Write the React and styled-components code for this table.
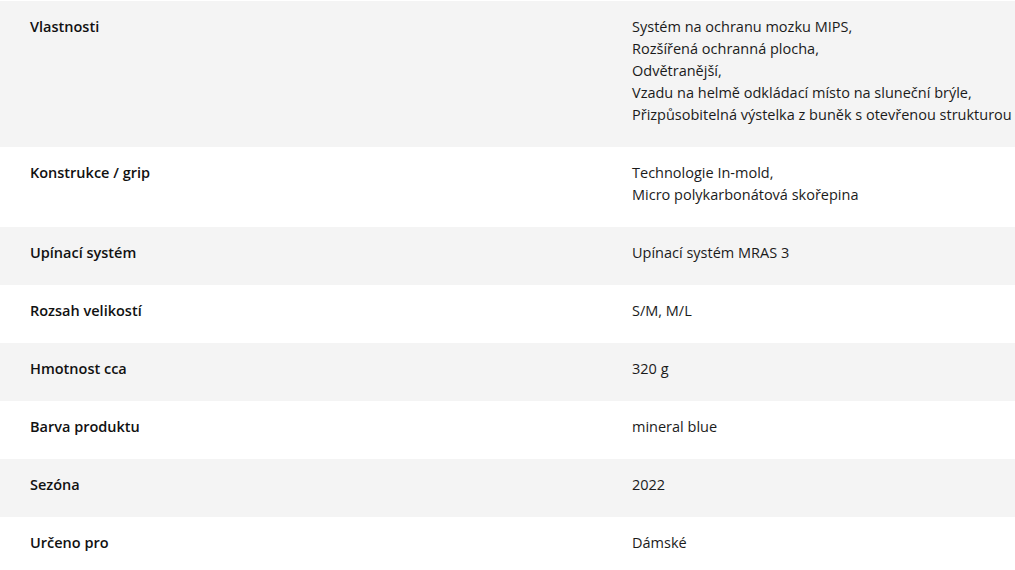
import React from "react";
import styled, { createGlobalStyle } from "styled-components";

const Global = createGlobalStyle`
  html, body { margin: 0; padding: 0; background: #ffffff; }
  body { font-family: "Open Sans", "Noto Sans", sans-serif; color: #1b1b1b; }
`;

const Table = styled.div`
  padding-top: 1px;
  width: 1015px;
  overflow: hidden;
`;

const Row = styled.div`
  display: grid;
  grid-template-columns: 632px 1fr;
  background: ${(p) => (p.$shaded ? "#f4f4f4" : "#ffffff")};
`;

const Label = styled.div`
  padding: 15px 0 21px 30px;
  font-size: 14.5px;
  line-height: 22px;
  font-weight: 600;
  color: #111111;
`;

const Value = styled.div`
  padding: 15px 0 21px;
  font-size: 14.5px;
  line-height: 22px;
  font-weight: 400;
  color: #1b1b1b;
  white-space: nowrap;
`;

const Line = styled.div``;

const rows = [
  [
    "Vlastnosti",
    [
      "Systém na ochranu mozku MIPS,",
      "Rozšířená ochranná plocha,",
      "Odvětranější,",
      "Vzadu na helmě odkládací místo na sluneční brýle,",
      "Přizpůsobitelná výstelka z buněk s otevřenou strukturou",
    ],
  ],
  ["Konstrukce / grip", ["Technologie In-mold,", "Micro polykarbonátová skořepina"]],
  ["Upínací systém", ["Upínací systém MRAS 3"]],
  ["Rozsah velikostí", ["S/M, M/L"]],
  ["Hmotnost cca", ["320 g"]],
  ["Barva produktu", ["mineral blue"]],
  ["Sezóna", ["2022"]],
  ["Určeno pro", ["Dámské"]],
];

export default function App() {
  return (
    <>
      <Global />
      <Table>
        {rows.map(([label, lines], i) => (
          <Row key={label} $shaded={i % 2 === 0}>
            <Label>{label}</Label>
            <Value>
              {lines.map((l) => (
                <Line key={l}>{l}</Line>
              ))}
            </Value>
          </Row>
        ))}
      </Table>
    </>
  );
}
